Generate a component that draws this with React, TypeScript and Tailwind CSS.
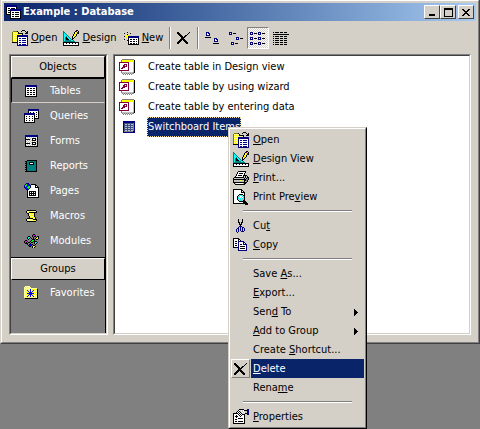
import React from 'react';
import clsx from 'clsx';

const palette: Record<string, string> = {
  k: '#000000',
  n: '#000080',
  w: '#ffffff',
  y: '#ffff00',
  p: '#ffff99',
  o: '#808000',
  g: '#808080',
  s: '#c0c0c0',
  t: '#008080',
  c: '#00ffff',
  m: '#ff00ff',
  r: '#800040',
  b: '#0000ff',
  l: '#00ff00',
  d: '#3a4f86',
};

const icons = {
  database: [
    'nnnnnnnnnnn.....',
    'nnnnnnnnnnn.....',
    'kwwwwwwwwwk.....',
    'kwkkwkkkkwk.....',
    'kwwwnnnnnnnnnnn.',
    'kwkknnnnnnnnnnn.',
    'kwwwkwwwwwwwwwk.',
    'kwkkkwkkwkkkkwk.',
    'kwwwkwwwwwwwwwk.',
    'kkkkkwkkwkkkkwk.',
    '....kwwwwwwwwwk.',
    '....kwkkwkkkkwk.',
    '....kwwwwwwwwwk.',
    '....kkkkkkkkkkk.',
  ],
  open: [
    '..........kkk...',
    '.ooook...k...k.k',
    'opypypk.......kk',
    'oypypykkkkk..kkk',
    'opypypypypk.....',
    'oypypnnnnnnnnnnn',
    'opypynnnnnnnnnnn',
    'oypypnwwwwwwwwwn',
    'opypynwnnwnnnnwn',
    'oypypnwwwwwwwwwn',
    'opypynwnnwnnnnwn',
    'oypypnwwwwwwwwwn',
    'kkkkknwnnwnnnnwn',
    '.....nwwwwwwwwwn',
    '.....nwnnwnnnnwn',
    '.....nnnnnnnnnnn',
  ],
  design: [
    '.............kk.',
    't...........kryk',
    'tt.........kyyrk',
    'tct........kyykk',
    'tcct......kyyk..',
    'tccct.....kyyk..',
    'tcctct...kyyk...',
    'tctkcct..kyk....',
    'tctkkcct.kk.....',
    'tctkkkcctk......',
    'tcttttttcct.....',
    'tttttttttttt....',
    'kkkkkkkkkkkkkkkk',
    'kwwkwwkwwkwwkwwk',
    'kwwwwwwwwwwwwwwk',
    'kkkkkkkkkkkkkkkk',
  ],
  create: [
    '....y...........',
    'y...k...y.......',
    '.k..y..k........',
    '..y.k.y.........',
    '...yyy..........',
    'ykyypnnnnnnnnnnn',
    '...yynnnnnnnnnnn',
    '..y.ykwwwwwwwwwk',
    '.k..ykwkkwkkwkwk',
    'y...kkwwwwwwwwwk',
    '....ykwkkwkkwkwk',
    '.....kwwwwwwwwwk',
    '.....kwkkwkkwkwk',
    '.....kkkkkkkkkkk',
  ],
  remove: [
    'kk..........k.',
    'kkk........k..',
    '.kkk......k...',
    '..kkk...kk....',
    '...kkk.kk.....',
    '....kkkk......',
    '....kkk.......',
    '...kkkkk......',
    '..kkk.kkk.....',
    '.kkk...kkk....',
    'kkk.....kkk...',
    'kk.......kk...',
  ],
  large: [
    '.nnn..........',
    '.nwnn.........',
    '.nwwn.........',
    '.nnnn.........',
    '..............',
    'kkkkkk........',
    '.........nnn..',
    '.........nwnn.',
    '.........nwwn.',
    '.........nnnn.',
    '..............',
    '........kkkkkk',
  ],
  small: [
    'nnn...........',
    'nwn.kkk.......',
    'nnn...........',
    '..............',
    '..............',
    '.......nnn....',
    '.......nwn.kkk',
    '.......nnn....',
    '..............',
    '..............',
    '..nnn.........',
    '..nwn.kkk.....',
    '..nnn.........',
  ],
  list: [
    'nnn.....nnn.....',
    'nwn.kkk.nwn.kkk.',
    'nnn.....nnn.....',
    '................',
    '................',
    'nnn.....nnn.....',
    'nwn.kkk.nwn.kkk.',
    'nnn.....nnn.....',
    '................',
    '................',
    'nnn.....nnn.....',
    'nwn.kkk.nwn.kkk.',
    'nnn.....nnn.....',
  ],
  details: [
    'k.kkkk.kkk.kkk..',
    '................',
    'kkkkkkkkkkkkkkkk',
    '................',
    'k.kkkk.kkk.kkk..',
    '................',
    'k.kkkk.kkk.kkk..',
    '................',
    'k.kkkk.kkk.kkk..',
    '................',
    'k.kkkk.kkk.kkk..',
    '................',
    'k.kkkk.kkk.kkk..',
  ],
  table: [
    'nnnnnnnnnnnn',
    'nnnnnnnnnnnn',
    'kwwwwwwwwwwk',
    'kwkkwkkwkkwk',
    'kwwwwwwwwwwk',
    'kwkkwkkwkkwk',
    'kwwwwwwwwwwk',
    'kwkkwkkwkkwk',
    'kwwwwwwwwwwk',
    'kwkkwkkwkkwk',
    'kwwwwwwwwwwk',
    'kkkkkkkkkkkk',
  ],
  tableSelected: [
    'nnnnnnnnnnnn',
    'nnnnnnnnnnnn',
    'ndddddddddgn',
    'ndssdssdssgn',
    'ndddddddddgn',
    'ndssdssdssgn',
    'ndddddddddgn',
    'ndssdssdssgn',
    'ndddddddddgn',
    'ndssdssdssgn',
    'ngggggggggnn',
    'nnnnnnnnnnnn',
  ],
  query: [
    '....nnnnnnnnnnn',
    '....nnnnnnnnnnn',
    '....kwwwwwwwwwk',
    '....kwkwwkwwkwk',
    'nnnnnnnnnnnwwwk',
    'nnnnnnnnnnnwkwk',
    'kwwwwwwwwwkwwwk',
    'kwkwwkwwkwkwkwk',
    'kwwwwwwwwwkwwwk',
    'kwkwwkwwkwkkkkk',
    'kwwwwwwwwwk....',
    'kwkwwkwwkwk....',
    'kwwwwwwwwwk....',
    'kkkkkkkkkkk....',
  ],
  form: [
    'nnnnnnnnnnnnn',
    'nnnnnnnnnnnnn',
    'kwswswswswswk',
    'kswswswkkkkwk',
    'kkkkkswkwwksk',
    'kwswswskkkkwk',
    'kswswswswswsk',
    'kwswswskkkkwk',
    'kkkkkswkwwksk',
    'kwswswskkkkwk',
    'kswswswswswsk',
    'kkkkkkkkkkkkk',
  ],
  report: [
    '..kkkkkkkkkk',
    'kktttttttttk',
    '.kttkkkkkttk',
    'kkttkwwwkttk',
    '.kttkkkkkttk',
    'kktttttttttk',
    '.ktttttttttk',
    'kktttttttttk',
    '.ktttttttttk',
    'kktttttttttk',
    '.ktttttttttk',
    'kkkkkkkkkkkk',
  ],
  page: [
    '..nnn..........',
    '.nlbbn.kkkkk...',
    'nllbbbnwwwwkk..',
    'nlbbllnwwwwkwk.',
    'nbblllnwwwwkkkk',
    '.nbblnwwwwwwwwk',
    '..nnnwwwwwwwwwk',
    '...kwwwwwwwwwwk',
    '...kwkkkkkkkwwk',
    '...kwkwkwkwkwwk',
    '...kwkkkkkkkwwk',
    '...kwkwkwkwkwwk',
    '...kwkkkkkkkwwk',
    '...kwwwwwwwwwwk',
    '...kkkkkkkkkkkk',
  ],
  macro: [
    '.kkkkkkkkk.',
    'kppppppppyk',
    'kyykkkkkkkk',
    '.kkpypypk..',
    '..kypypyk..',
    '..kpypypk..',
    '...kpypyk..',
    '...kypypyk.',
    '.kkkkkkypk.',
    'kpppppykkkk',
    'kyppppppyyk',
    '.kkkkkkkkk.',
  ],
  module: [
    '.........kk....',
    '........kmmk...',
    '....kk..kmkk.kk',
    '...kcck..k..kyk',
    '...kck.k.k.kyyk',
    '....k...kkk.kk.',
    '.kk....kllk....',
    'kmmk..kllkkkk..',
    'kmk.kk.kk.kcck.',
    '.kkk..k...kck..',
    '...k.kbbk..k...',
    '....kbbk.kk....',
    '.....kk.kyyk...',
    '........kyk....',
  ],
  favorites: [
    '.ppppp........',
    'pypypyp.......',
    'ppppppppppppp.',
    'pypypybpypypyk',
    'ppybpybpybpypk',
    'pypybpbpbypypk',
    'ppypybbbypypyk',
    'pypbbbbbbbpypk',
    'ppypybbbypypyk',
    'pypybpbpbypypk',
    'ppybpybpybpypk',
    'pypypypypypypk',
    '.kkkkkkkkkkkkk',
  ],
  wizard: [
    '...gggggggggggg.',
    '..gyyyyyyyyyyyyk',
    '..gyyyyyyyyyyyyk',
    'rrrrrrrrrrwwwwsk',
    'rwwwwwwwwrwwwwsk',
    'rwwwwrrrwrwwwwsk',
    'rwwwrrwrwrwwwwsk',
    'rwwwrrrrwrwwwwsk',
    'rwwrrrwwwrwwwwsk',
    'rwrrwwwwwrwwwwsk',
    'rwwwwwwwwrwwwwsk',
    'rrrrrrrrrrwwwwsk',
    '..gwwwwwwwwwwwsk',
    '..gsssssssssssgk',
    '...gsgsgsgsgsgg.',
    '....g.g.g.g.g...',
  ],
  print: [
    '.....kkkkkkkk...',
    '....kwwwwwwwk...',
    '....kwkkkkwk....',
    '...kwwwwwwwk....',
    '...kwkkkkwkkkk..',
    '..kwwwwwwwksksk.',
    '.kkkkkkkkkkskskk',
    'ksssssssssskskgk',
    'kkkkkkkkkkkkkggk',
    'kssssssyysskkgk.',
    'kssssssssssksgk.',
    'kkkkkkkkkkkkkk..',
    '.kswwwwwwwskk...',
    '..kkkkkkkkkk....',
  ],
  preview: [
    'kkkkkkkkk.......',
    'kwwwwwwwkk......',
    'kwwwwwwwkwk.....',
    'kwwwwwwwkkkk....',
    'kwwwwwwwwwwk....',
    'kwwwwwkkkkwk....',
    'kwwwwksccskk....',
    'kwwwkscwwcsk....',
    'kwwwkcwwcwck....',
    'kwwwkcwcwcck....',
    'kwwwkscccsck....',
    'kwwwwksccskk....',
    'kwwwwwkkkkkkk...',
    'kwwwwwwwwwkkkk..',
    'kkkkkkkkkkkkkkk.',
    '............kkk.',
  ],
  cut: [
    '..k...k..',
    '..k...k..',
    '..k...k..',
    '..kk.kk..',
    '...k.k...',
    '...kkk...',
    '....k....',
    '...nnn...',
    '..n.n.nn.',
    '.nn.n.n.n',
    'n.n.n.n.n',
    'n.n.n.n.n',
    'n.n..nnn.',
    '.n.......',
  ],
  copy: [
    'kkkkkk.........',
    'kwwwwkk........',
    'kwwwwkwk.......',
    'kwkkwnnnnnn....',
    'kwwwwnwwwwnn...',
    'kwkkwnwwwwnwn..',
    'kwwwwnwkkwnnnn.',
    'kwkkwnwwwwwwwn.',
    'kwwwwnwkkkkkwn.',
    'kkkkknwwwwwwwn.',
    '.....nwkkkkkwn.',
    '.....nwwwwwwwn.',
    '.....nnnnnnnnn.',
  ],
  properties: [
    '......kkkkk...nn',
    '.....kwswswkkknn',
    '....kwkswswsssnn',
    '...kwkwkswswssnn',
    'kkkkkwkwkswskknn',
    'kwwwwkwkwkkk..nn',
    'kwwkwwkwkwwk....',
    'kwkkkwwkwwwk....',
    'kwwkwwwwwwwk....',
    'kwwwwkkkkkwk....',
    'kwkkwwwwwwwk....',
    'kwwwwwwwwwwk....',
    'kwkkwkkkkkwk....',
    'kwwwwwwwwwwk....',
    'kkkkkkkkkkkk....',
  ],
  minimize: ['kkkkkk', 'kkkkkk'],
  maximize: [
    'kkkkkkkkk',
    'kkkkkkkkk',
    'k.......k',
    'k.......k',
    'k.......k',
    'k.......k',
    'k.......k',
    'k.......k',
    'kkkkkkkkk',
  ],
  close: [
    'kk....kk',
    '.kk..kk.',
    '..kkkk..',
    '...kk...',
    '..kkkk..',
    '.kk..kk.',
    'kk....kk',
  ],
  arrow: ['k...', 'kk..', 'kkk.', 'kkkk', 'kkk.', 'kk..', 'k...'],
};

type IconName = keyof typeof icons;

const Icon = ({ name }: { name: IconName }) => {
  const rows = icons[name];
  const width = rows[0].length;

  return (
    <svg
      width={width}
      height={rows.length}
      viewBox={`0 0 ${width} ${rows.length}`}
      shapeRendering="crispEdges"
      className="shrink-0"
      aria-hidden="true"
    >
      {rows.map((row, y) =>
        row.split('').map((c, x) =>
          c === '.' ? null : <rect key={`${x}-${y}`} x={x} y={y} width="1" height="1" fill={palette[c]} />
        )
      )}
    </svg>
  );
};

// Label with one underlined access key, marked by "&" in front of the letter
const Label = ({ text }: { text: string }) => {
  const at = text.indexOf('&');
  if (at < 0) return <span>{text}</span>;
  return (
    <span>
      {text.slice(0, at)}
      <u className="underline-offset-1">{text[at + 1]}</u>
      {text.slice(at + 2)}
    </span>
  );
};

const TitleButton = ({ icon, label, className }: { icon: IconName; label: string; className?: string }) => (
  <button
    aria-label={label}
    className={clsx(
      'flex h-3.5 w-4 justify-center border border-t-white border-l-white border-r-[#404040] border-b-[#404040] bg-[#d4d0c8]',
      className
    )}
  >
    <Icon name={icon} />
  </button>
);

const ToolButton = ({ icon, text }: { icon: IconName; text: string }) => (
  <button className="flex h-[22px] items-center gap-[3px]">
    <Icon name={icon} />
    <Label text={text} />
  </button>
);

const Divider = () => (
  <div className="flex h-[22px] shrink-0">
    <span className="w-px bg-[#808080]" />
    <span className="w-px bg-white" />
  </div>
);

const GroupHeader = ({ text }: { text: string }) => (
  <button className="h-[22px] w-full border border-t-white border-l-white border-r-black border-b-black bg-[#d4d0c8] text-center">
    {text}
  </button>
);

const objects: { icon: IconName; text: string }[] = [
  { icon: 'table', text: 'Tables' },
  { icon: 'query', text: 'Queries' },
  { icon: 'form', text: 'Forms' },
  { icon: 'report', text: 'Reports' },
  { icon: 'page', text: 'Pages' },
  { icon: 'macro', text: 'Macros' },
  { icon: 'module', text: 'Modules' },
];

const ObjectItem = ({ icon, text, active }: { icon: IconName; text: string; active?: boolean }) => (
  <button
    className={clsx(
      'flex h-[25px] w-full items-center border text-white',
      active ? 'border-t-black border-l-black border-r-transparent border-b-[#d4d0c8]' : 'border-transparent'
    )}
  >
    <span className="flex w-[38px] justify-center">
      <Icon name={icon} />
    </span>
    {text}
  </button>
);

type MenuEntry = { text: string; icon?: IconName; submenu?: boolean; active?: boolean };

const menuGroups: MenuEntry[][] = [
  [
    { text: '&Open', icon: 'open' },
    { text: '&Design View', icon: 'design' },
    { text: '&Print...', icon: 'print' },
    { text: 'Print Pre&view', icon: 'preview' },
  ],
  [
    { text: 'Cu&t', icon: 'cut' },
    { text: '&Copy', icon: 'copy' },
  ],
  [
    { text: 'Save &As...' },
    { text: '&Export...' },
    { text: 'Sen&d To', submenu: true },
    { text: '&Add to Group', submenu: true },
    { text: 'Create &Shortcut...' },
    { text: '&Delete', icon: 'remove', active: true },
    { text: 'Rena&me' },
  ],
  [{ text: '&Properties', icon: 'properties' }],
];

const MenuItem = ({ text, icon, submenu, active }: MenuEntry) => (
  <button role="menuitem" className="flex h-[19px] w-full items-center gap-px text-left">
    <span
      className={clsx(
        'flex h-[19px] w-[19px] items-center justify-center',
        active && 'border border-t-white border-l-white border-r-[#808080] border-b-[#808080]'
      )}
    >
      {icon && <Icon name={icon} />}
    </span>
    <span
      className={clsx('flex h-[19px] flex-1 items-center justify-between pt-px pr-1.5 pl-0.5', active && 'bg-[#0a246a] text-white')}
    >
      <Label text={text} />
      {submenu && <Icon name="arrow" />}
    </span>
  </button>
);

const ContextMenu = () => (
  <div
    role="menu"
    className="absolute top-[9px] left-[80px] z-10 w-[139px] border border-t-[#d4d0c8] border-l-[#d4d0c8] border-r-black border-b-black text-black"
  >
    <div className="border border-t-white border-l-white border-r-[#808080] border-b-[#808080] bg-[#d4d0c8] p-px">
      {menuGroups.map((group, i) => (
        <React.Fragment key={i}>
          {i > 0 && <div role="separator" className="mx-3 my-1 h-0.5 border-t border-b border-t-[#808080] border-b-white" />}
          {group.map((item) => (
            <MenuItem key={item.text} {...item} />
          ))}
        </React.Fragment>
      ))}
    </div>
  </div>
);

const shortcuts = ['Create table in Design view', 'Create table by using wizard', 'Create table by entering data'];

const Sunken = ({ className, children }: { className?: string; children: React.ReactNode }) => (
  <div className={clsx('border border-t-[#808080] border-l-[#808080] border-r-white border-b-white', className)}>
    <div className="h-full border border-t-[#404040] border-l-[#404040] border-r-[#d4d0c8] border-b-[#d4d0c8]">{children}</div>
  </div>
);

const App = () => {
  return (
    <div className="min-h-screen overflow-hidden bg-[#808080] font-['DejaVu_Sans_Condensed','DejaVu_Sans',sans-serif] text-[11px] leading-[14px] whitespace-nowrap text-black">
      <div className="border border-t-0 border-l-[#d4d0c8] border-r-[#404040] border-b-[#404040]">
        <div className="border border-t-white border-l-white border-r-[#808080] border-b-[#808080] bg-[#d4d0c8]">
          {/* Title bar */}
          <div className="mx-0.5 mt-0.5 flex h-[18px] items-center bg-linear-to-r from-[#0a246a] to-[#a6caf0] px-0.5">
            <Icon name="database" />
            <h1 className="flex-1 pl-px font-bold text-white">Example : Database</h1>
            <TitleButton icon="minimize" label="Minimize" className="items-end pb-0.5" />
            <TitleButton icon="maximize" label="Maximize" className="items-center" />
            <TitleButton icon="close" label="Close" className="ml-0.5 items-center" />
          </div>

          {/* Toolbar */}
          <div className="flex items-center pt-1.5 pb-[5px] pl-2.5">
            <div className="flex gap-1.5">
              <ToolButton icon="open" text="&Open" />
              <ToolButton icon="design" text="&Design" />
              <ToolButton icon="create" text="&New" />
            </div>
            <div className="flex items-center gap-1.5 pl-1.5">
              <Divider />
              <button aria-label="Delete" className="flex h-[22px] items-center">
                <Icon name="remove" />
              </button>
              <Divider />
            </div>
            <div className="flex items-center gap-1 pl-1.5">
              <button aria-label="Large icons" className="flex h-[22px] w-5 items-center">
                <Icon name="large" />
              </button>
              <button aria-label="Small icons" className="flex h-[22px] items-center">
                <Icon name="small" />
              </button>
              <button
                aria-label="List"
                aria-pressed="true"
                className="flex h-[22px] w-[22px] items-center justify-center border border-t-[#808080] border-l-[#808080] border-r-white border-b-white bg-[repeating-conic-gradient(#ffffff_0_25%,#d4d0c8_0_50%)] bg-[length:2px_2px]"
              >
                <Icon name="list" />
              </button>
              <button aria-label="Details" className="flex h-[22px] items-center">
                <Icon name="details" />
              </button>
            </div>
          </div>

          <div className="flex gap-[5px] px-[7px] pb-[7px]">
            {/* Object bar */}
            <Sunken className="w-[99px] shrink-0">
              <div className="h-full border-r border-black bg-[#808080] pb-7">
                <GroupHeader text="Objects" />
                {objects.map((item) => (
                  <ObjectItem key={item.text} {...item} active={item.text === 'Tables'} />
                ))}
                <div className="mt-1 border-t border-black">
                  <GroupHeader text="Groups" />
                </div>
                <ObjectItem icon="favorites" text="Favorites" />
              </div>
            </Sunken>

            {/* Table list */}
            <Sunken className="flex-1">
              <ul className="h-full bg-white pt-px pl-1">
                {shortcuts.map((text) => (
                  <li key={text} className="flex h-5 items-center gap-[13px]">
                    <Icon name="wizard" />
                    {text}
                  </li>
                ))}
                <li className="flex h-5 items-center">
                  <span className="flex w-7 pl-1">
                    <Icon name="tableSelected" />
                  </span>
                  <div className="relative flex h-5 items-center border border-dotted border-[#f5db95] bg-[#0a246a] text-white">
                    Switchboard Items
                    <ContextMenu />
                  </div>
                </li>
              </ul>
            </Sunken>
          </div>
        </div>
      </div>
    </div>
  );
};

export default App;
